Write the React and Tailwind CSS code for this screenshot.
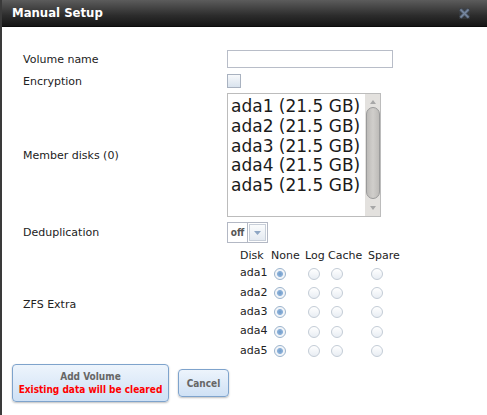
import React from "react";

const disks = ["ada1", "ada2", "ada3", "ada4", "ada5"];

const boldFont = { fontFamily: '"DejaVu Sans Condensed", "DejaVu Sans", Verdana, sans-serif' };

const Radio = ({ checked }) => (
  <span
    className={`ml-[3px] inline-block w-[12px] h-[12px] rounded-full border ${
      checked
        ? "border-[#9bb3cc] bg-[radial-gradient(circle,#6f9bc9_0%,#8fb3da_38%,#eef2f7_46%,#ffffff_100%)]"
        : "border-[#c3ccd6] bg-[linear-gradient(#ffffff,#e8edf3)]"
    }`}
  />
);

const App = () => {
  return (
    <div
      className="w-[487px] h-[415px] bg-white border-l-2 border-[#3a3a3a] flex flex-col overflow-hidden text-[#222]"
      style={{ fontFamily: '"DejaVu Sans", Verdana, sans-serif' }}
    >
      {/* Title bar */}
      <div className="h-[27px] shrink-0 flex items-center justify-between pl-[10px] pr-[17px] bg-[linear-gradient(#5c5c5c,#2c2c2c_60%,#161616)] border-b border-[#0c0c0c]">
        <span className="text-white font-bold text-[13px]" style={boldFont}>
          Manual Setup
        </span>
        <svg width="11" height="11" viewBox="0 0 11 11">
          <rect x="0" y="0" width="11" height="11" fill="#3a3f47" opacity="0.5" />
          <path d="M1.5 1.5 L9.5 9.5 M9.5 1.5 L1.5 9.5" stroke="#56657a" strokeWidth="3" />
          <path d="M1.5 1.5 L9.5 9.5 M9.5 1.5 L1.5 9.5" stroke="#7888a0" strokeWidth="1.2" />
        </svg>
      </div>

      {/* Form */}
      <div className="pl-[21px] pt-[23px] text-[11px] flex flex-col">
        <div className="flex items-center h-[18px]">
          <div className="w-[204px] pt-[2px]">Volume name</div>
          <div className="w-[166px] h-[18px] border border-[#b8bdc8] bg-white" />
        </div>

        <div className="flex items-center h-[14px] mt-[6px]">
          <div className="w-[204px] pt-[2px]">Encryption</div>
          <div className="w-[14px] h-[14px] border border-[#a9b2c0] bg-[linear-gradient(#f7f9fb,#d9e3ee)]" />
        </div>

        <div className="flex items-center mt-[5px]">
          <div className="w-[204px] pt-[2px]">Member disks (0)</div>
          <div className="w-[154px] h-[124px] border border-[#bcbcbc] flex bg-white">
            <div className="flex-1 pl-[3px] pt-[3px] text-[17px] leading-[19.8px] text-[#1a1a1a] whitespace-nowrap">
              {disks.map((d) => (
                <div key={d}>{d} (21.5 GB)</div>
              ))}
            </div>
            <div className="w-[15px] bg-[#e3e1de] flex flex-col items-center">
              <svg width="8" height="10" viewBox="0 0 8 10" className="mt-[3px]">
                <path d="M1 7 L4 3 L7 7 Z" fill="#a7a7a7" />
              </svg>
              <div className="w-[14px] h-[92px] rounded-full border border-[#9a9a9a] bg-[linear-gradient(90deg,#bdbbb8,#d0cecb,#bdbbb8)]" />
              <svg width="8" height="10" viewBox="0 0 8 10" className="mt-[4px]">
                <path d="M1 3 L4 7 L7 3 Z" fill="#a7a7a7" />
              </svg>
            </div>
          </div>
        </div>

        <div className="flex items-center mt-[5px]">
          <div className="w-[204px] pt-[2px]">Deduplication</div>
          <div className="flex h-[21px]">
            <div
              className="w-[21px] border border-[#b3b8c4] flex items-center justify-center text-[10px] font-bold text-[#555]"
              style={boldFont}
            >
              off
            </div>
            <div className="w-[20px] border border-l-0 border-[#b3b8c4] p-[1px]">
              <div className="w-full h-full border border-[#c8cfd9] bg-[linear-gradient(#fbfcfd,#e4eaf1)] flex items-center justify-center">
                <svg width="7" height="4" viewBox="0 0 7 4">
                  <path d="M0 0 L7 0 L3.5 4 Z" fill="#8ea6c4" />
                </svg>
              </div>
            </div>
          </div>
        </div>

        <div className="flex items-center mt-[5px]">
          <div className="w-[204px] pt-[2px]">ZFS Extra</div>
          <div className="pl-[13px]">
            <div className="flex h-[16px] items-center">
              <div className="w-[31px]">Disk</div>
              <div className="w-[34px]">None</div>
              <div className="w-[23px]">Log</div>
              <div className="w-[40px]">Cache</div>
              <div>Spare</div>
            </div>
            {disks.map((d) => (
              <div key={d} className="flex h-[19.3px] items-center">
                <div className="w-[31px]">{d}</div>
                <div className="w-[34px] flex"><Radio checked /></div>
                <div className="w-[23px] flex"><Radio /></div>
                <div className="w-[40px] flex"><Radio /></div>
                <div className="flex"><Radio /></div>
              </div>
            ))}
          </div>
        </div>
      </div>

      {/* Buttons */}
      <div className="flex items-center gap-[9px] pl-[10px] mt-[4px]" style={boldFont}>
        <button className="w-[157px] h-[38px] rounded-[4px] border border-[#7ea3cc] bg-[linear-gradient(#edf4fc,#cfe1f5)] shadow-[0_1px_2px_rgba(0,0,0,0.25)] flex flex-col items-center justify-center text-[10px] font-bold leading-[13px] whitespace-nowrap">
          <span className="text-[#666]">Add Volume</span>
          <span className="text-[#ff0000]">Existing data will be cleared</span>
        </button>
        <button className="w-[51px] h-[28px] rounded-[4px] border border-[#7ea3cc] bg-[linear-gradient(#edf4fc,#cfe1f5)] shadow-[0_1px_2px_rgba(0,0,0,0.25)] text-[10px] font-bold text-[#666]">
          Cancel
        </button>
      </div>
    </div>
  );
};

export default App;
